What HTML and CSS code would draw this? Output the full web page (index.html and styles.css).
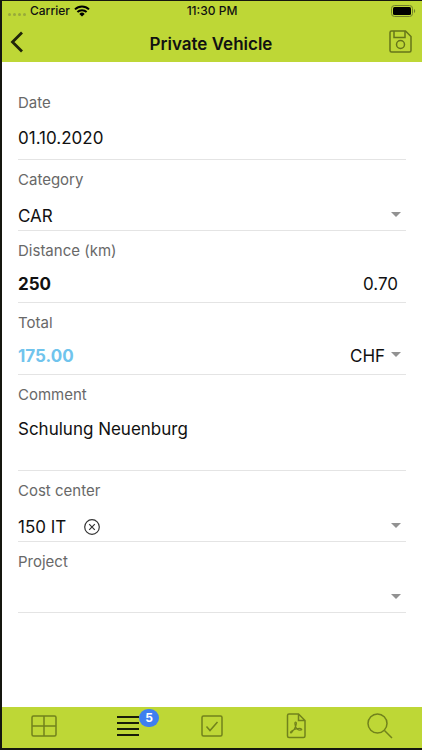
FILE: index.html
```html
<!DOCTYPE html>
<html lang="en">
<head>
  <meta charset="UTF-8">
  <meta name="viewport" content="width=device-width, initial-scale=1.0">
  <title>Private Vehicle</title>
  <link rel="stylesheet" href="styles.css">
</head>
<body>
  <div class="app">
    <header class="header">
      <div class="status-bar">
        <div class="carrier">
          <span class="signal"><i></i><i></i><i></i><i></i></span>
          <span>Carrier</span>
          <svg width="16" height="12" viewBox="0 0 16 12">
            <path d="M1 4.4a10 10 0 0 1 14 0M3.4 7a6.6 6.6 0 0 1 9.2 0" fill="none" stroke="#000" stroke-width="2"/>
            <path d="M8 11.6 5.3 8.9a3.9 3.9 0 0 1 5.4 0z"/>
          </svg>
        </div>
        <span class="time">11:30 PM</span>
        <svg class="battery" width="25" height="12" viewBox="0 0 25 12">
          <rect x=".5" y=".5" width="21" height="11" rx="3" fill="none" stroke="#71802a"/>
          <rect x="2" y="2" width="18" height="8" rx="1.5"/>
          <path d="M23 4v4c1.6-.6 1.6-3.4 0-4z" fill="#71802a"/>
        </svg>
      </div>
      <div class="nav-bar">
        <button class="icon-button" type="button" aria-label="Back">
          <svg width="14" height="22" viewBox="0 0 14 22"><path d="M12 1.5 2.5 11l9.5 9.5" fill="none" stroke="#20250a" stroke-width="2.8"/></svg>
        </button>
        <h1>Private Vehicle</h1>
        <button class="icon-button save" type="button" aria-label="Save">
          <svg width="23" height="23" viewBox="0 0 23 23" fill="none" stroke="#66751a" stroke-width="1.5">
            <path d="M2.5 1h14L22 6.500V20.500Q22 22 20.500 22h-18Q1 22 1 20.500v-18Q1 1 2.500 1z"/>
            <path d="M5 1v6.500h11V1"/>
            <circle cx="11.500" cy="14.500" r="4"/>
          </svg>
        </button>
      </div>
    </header>

    <main class="form">
      <div class="field date">
        <label for="date">Date</label>
        <input type="text" id="date" value="01.10.2020">
      </div>

      <div class="field choice">
        <label for="category">Category</label>
        <div class="select">
          <select id="category"><option>CAR</option></select>
          <svg class="arrow" width="10" height="5" viewBox="0 0 10 5"><path d="M0 0h10L5 5z"/></svg>
        </div>
      </div>

      <div class="field">
        <label for="distance">Distance (km)</label>
        <div class="row">
          <input type="text" id="distance" class="bold" value="250">
          <input type="text" class="rate" aria-label="Rate" value="0.70">
        </div>
      </div>

      <div class="field">
        <label for="total">Total</label>
        <div class="row">
          <input type="text" id="total" class="bold total" value="175.00">
          <div class="select currency">
            <select aria-label="Currency"><option>CHF</option></select>
            <svg class="arrow" width="10" height="5" viewBox="0 0 10 5"><path d="M0 0h10L5 5z"/></svg>
          </div>
        </div>
      </div>

      <div class="field comment">
        <label for="comment">Comment</label>
        <textarea id="comment">Schulung Neuenburg</textarea>
      </div>

      <div class="field choice">
        <label for="cost-center">Cost center</label>
        <div class="select">
          <select id="cost-center"><option>150 IT</option></select>
          <button class="clear" type="button" aria-label="Clear cost center">
            <svg width="16" height="16" viewBox="0 0 16 16" fill="none" stroke="#333" stroke-width="1.2"><circle cx="8" cy="8" r="7.300"/><path d="m5.200 5.200 5.600 5.600m0-5.600-5.600 5.600"/></svg>
          </button>
          <svg class="arrow" width="10" height="5" viewBox="0 0 10 5"><path d="M0 0h10L5 5z"/></svg>
        </div>
      </div>

      <div class="field choice">
        <label for="project">Project</label>
        <div class="select">
          <select id="project"><option></option></select>
          <svg class="arrow" width="10" height="5" viewBox="0 0 10 5"><path d="M0 0h10L5 5z"/></svg>
        </div>
      </div>
    </main>

    <nav class="tab-bar">
      <button class="tab" type="button" aria-label="Overview">
        <svg width="26" height="24" viewBox="0 0 26 24"><rect x="1" y="2" width="24" height="20" rx="1.500"/><path d="M13 2v20M1 12h24"/></svg>
      </button>
      <button class="tab active" type="button" aria-label="Expenses">
        <svg width="22" height="24" viewBox="0 0 22 24"><path d="M0 3h22M0 9h22M0 15h22M0 21h22"/></svg>
        <span class="badge">5</span>
      </button>
      <button class="tab" type="button" aria-label="Approvals">
        <svg width="22" height="24" viewBox="0 0 22 24"><rect x="1" y="2" width="20" height="20" rx="1.500"/><path d="m5.500 12.500 3.500 4 7.500-8.500"/></svg>
      </button>
      <button class="tab" type="button" aria-label="Reports">
        <svg width="20" height="26" viewBox="0 0 20 26"><path d="M3 1h9.500L19 7.500V23q0 1.500-1.500 1.500H3Q1.500 24.500 1.500 23V2.500Q1.500 1 3 1zM12.500 1v6.500H19"/><path d="M9.700 9c-1.200 0-.9 2.500-.1 4.600.9 2.300 2.600 4 5.600 3.400 1.200-.4.300-1.600-1.700-1.600-3.300 0-6.300 1.200-8.100 2.700-1.800 1.500-.8 2.600.4 1.200 1.800-2 3.500-4.700 4.200-7 .5-1.800.6-3.300-.3-3.300z" stroke-width="1.200"/></svg>
      </button>
      <button class="tab" type="button" aria-label="Search">
        <svg width="26" height="26" viewBox="0 0 26 26"><circle cx="10.500" cy="10.500" r="9.500"/><path d="m17.500 17.500 7.500 7.500"/></svg>
      </button>
    </nav>
  </div>
</body>
</html>
```
FILE: styles.css
```css
* {
  box-sizing: border-box;
}

body {
  margin: 0;
  font-family: Inter, "Liberation Sans", sans-serif;
  background: #fff;
  color: #111;
}

.app {
  display: flex;
  flex-direction: column;
  min-height: 100vh;
  border: solid #15170f;
  border-width: 1px 0 2px 2px;
}

svg {
  display: block;
}

button {
  padding: 0;
  border: none;
  background: none;
  font-family: inherit;
  cursor: pointer;
}

/* Header */
.header,
.tab-bar {
  background: #bed736;
}

.status-bar {
  display: grid;
  grid-template-columns: 1fr auto 1fr;
  align-items: center;
  height: 20px;
  padding: 0 6px;
  font-size: 12px;
  font-weight: 500;
  line-height: 20px;
}

.carrier {
  display: flex;
  align-items: center;
  gap: 4px;
}

.signal {
  display: flex;
  gap: 2px;
  padding-top: 6px;
}

.signal i {
  width: 3px;
  height: 3px;
  border-radius: 50%;
  background: #98aa3a;
}

.battery {
  justify-self: end;
}

.nav-bar {
  display: grid;
  grid-template-columns: 1fr auto 1fr;
  align-items: center;
  height: 41px;
  padding: 0 10px 0 8px;
}

h1 {
  margin: 0;
  font-size: 17px;
  font-weight: 600;
  line-height: 24px;
  padding-top: 4px;
}

.save {
  justify-self: end;
}

/* Form */
.form {
  flex: 1;
  padding: 21px 16px;
}

.field {
  display: flex;
  flex-direction: column;
  gap: 11px;
  padding: 10px 0 6px;
  border-bottom: 1px solid #e4e4e4;
}

.date {
  gap: 13px;
  padding-bottom: 9px;
}

.comment {
  gap: 12px;
}

.choice {
  gap: 14px;
  padding-bottom: 2px;
}

label {
  font-size: 15px;
  font-weight: 400;
  line-height: 20px;
  color: #686868;
}

input,
select,
textarea {
  width: 100%;
  min-width: 0;
  height: 24px;
  padding: 0;
  border: none;
  outline: none;
  background: none;
  color: inherit;
  font-family: inherit;
  font-size: 17px;
  line-height: 24px;
  appearance: none;
}

textarea {
  display: block;
  height: 47px;
  resize: none;
}

.row {
  display: flex;
}

.bold {
  font-weight: 700;
}

.total {
  color: #70c4ed;
}

.rate {
  padding-right: 8px;
  text-align: right;
}

.select {
  position: relative;
}

.currency select {
  width: auto;
  padding-right: 20px;
}

.arrow {
  position: absolute;
  top: 8px;
  right: 5px;
  fill: #929292;
  pointer-events: none;
}

.clear {
  position: absolute;
  top: 4px;
  left: 66px;
}

/* Tab bar */
.tab-bar {
  display: grid;
  grid-template-columns: repeat(5, 1fr);
  height: 41px;
}

.tab {
  display: flex;
  position: relative;
  align-items: center;
  justify-content: center;
  padding-bottom: 3px;
}

.tab svg {
  fill: none;
  stroke: #71821c;
  stroke-width: 1.5;
}

.tab.active svg {
  stroke: #181c08;
  stroke-width: 2;
}

.badge {
  position: absolute;
  top: 2px;
  left: 50%;
  width: 20px;
  height: 18px;
  margin-left: 11px;
  border-radius: 9px;
  background: #3e7ff0;
  color: #fff;
  font-size: 12px;
  font-weight: 700;
  line-height: 18px;
}
```
